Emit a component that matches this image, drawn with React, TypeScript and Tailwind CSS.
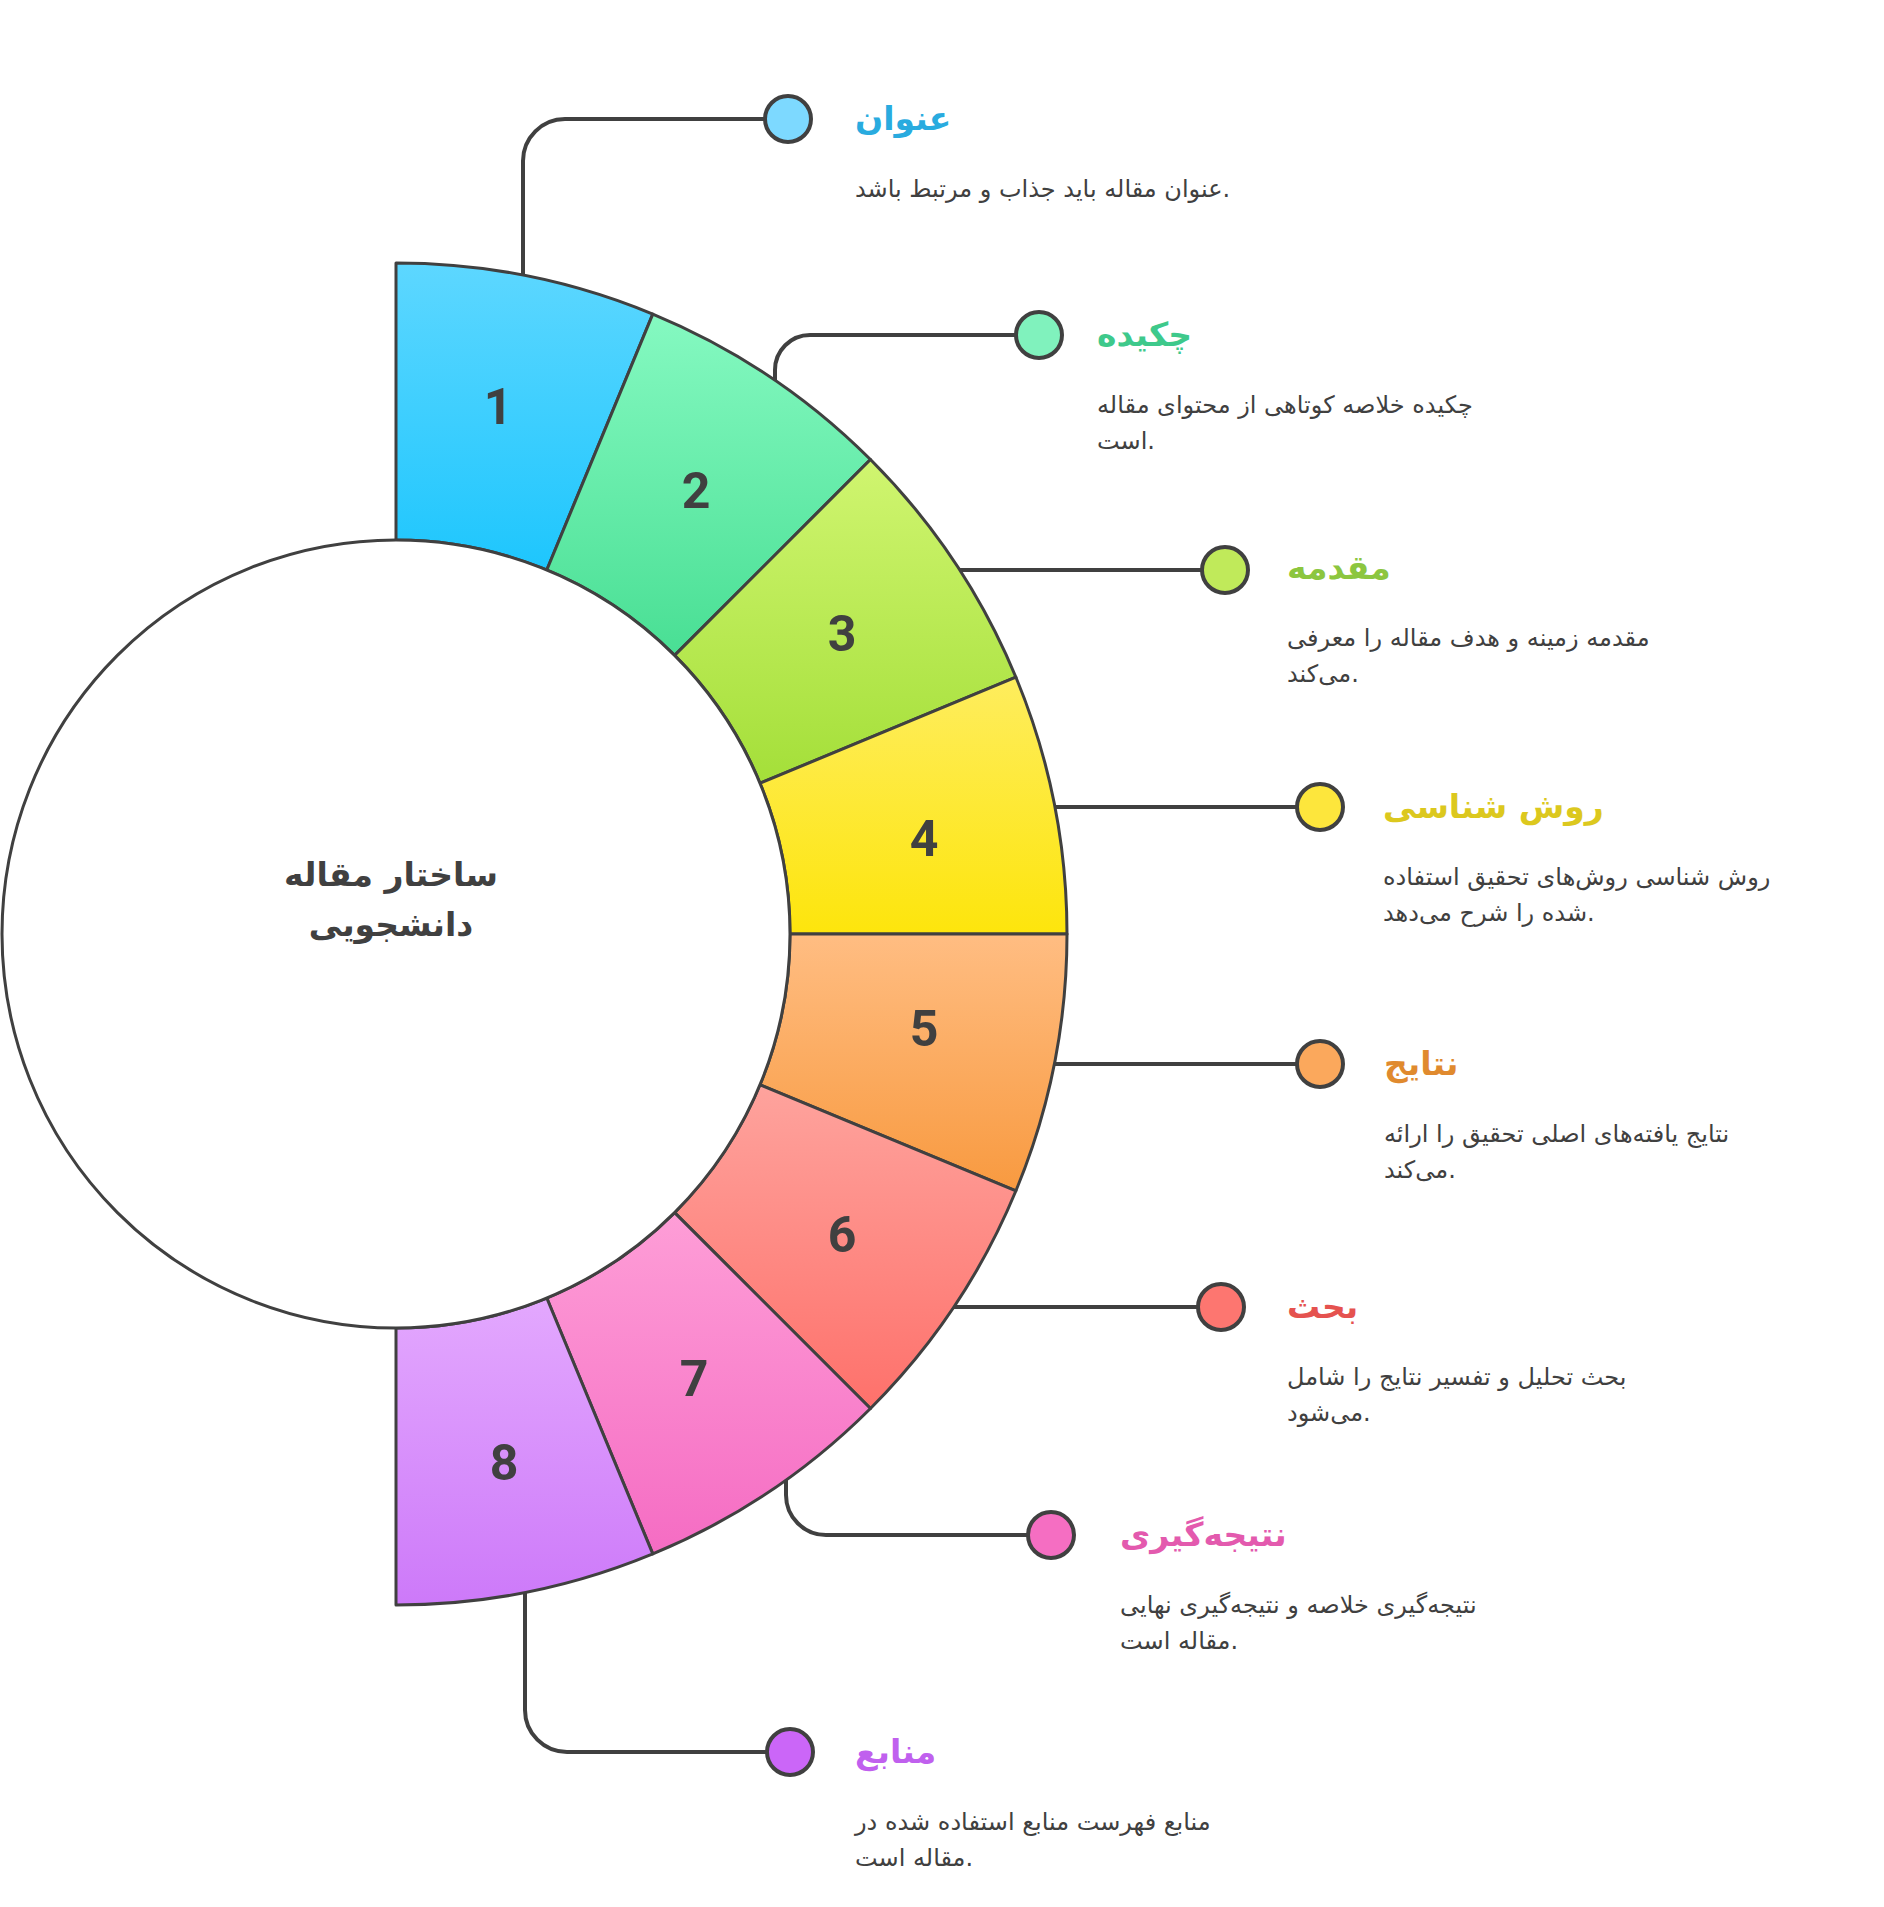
import React from "react";

// ساختار مقاله دانشجویی — radial diagram

const CX = 396;
const CY = 934;
const R_IN = 394;
const R_OUT = 671;

type Item = {
  n: number;
  title: string;
  lines: string[];
  dot: [number, number];
  num: [number, number];
  pos: string; // label position on the canvas
  titleClass: string;
  from: string;
  to: string;
  dotFill: string;
};

const items: Item[] = [
  {
    n: 1,
    title: "عنوان",
    lines: ["عنوان مقاله باید جذاب و مرتبط باشد."],
    dot: [788, 119],
    num: [498, 406],
    pos: "left-[855px] top-[97px]",
    titleClass: "text-[#29abdf]",
    from: "#5dd7ff",
    to: "#1ec6fd",
    dotFill: "#7dd9ff",
  },
  {
    n: 2,
    title: "چکیده",
    lines: ["چکیده خلاصه کوتاهی از محتوای مقاله", "است."],
    dot: [1039, 335],
    num: [696, 490],
    pos: "left-[1097px] top-[313px]",
    titleClass: "text-[#3ec98b]",
    from: "#85f9c1",
    to: "#49df94",
    dotFill: "#80f2bd",
  },
  {
    n: 3,
    title: "مقدمه",
    lines: ["مقدمه زمینه و هدف مقاله را معرفی", "می‌کند."],
    dot: [1225, 570],
    num: [842, 633],
    pos: "left-[1287px] top-[546px]",
    titleClass: "text-[#8cc63f]",
    from: "#d0f570",
    to: "#a4df39",
    dotFill: "#c0ea5a",
  },
  {
    n: 4,
    title: "روش شناسی",
    lines: ["روش شناسی روش‌های تحقیق استفاده", "شده را شرح می‌دهد."],
    dot: [1320, 807],
    num: [924, 838],
    pos: "left-[1383px] top-[785px]",
    titleClass: "text-[#dcc81e]",
    from: "#feed5e",
    to: "#fde50c",
    dotFill: "#fde63c",
  },
  {
    n: 5,
    title: "نتایج",
    lines: ["نتایج یافته‌های اصلی تحقیق را  ارائه", "می‌کند."],
    dot: [1320, 1064],
    num: [924, 1028],
    pos: "left-[1384px] top-[1042px]",
    titleClass: "text-[#e08a2e]",
    from: "#ffbd82",
    to: "#f89a40",
    dotFill: "#fba85c",
  },
  {
    n: 6,
    title: "بحث",
    lines: ["بحث تحلیل و تفسیر نتایج را شامل", "می‌شود."],
    dot: [1221, 1307],
    num: [842, 1234],
    pos: "left-[1287px] top-[1285px]",
    titleClass: "text-[#e5524f]",
    from: "#fea39d",
    to: "#fe716b",
    dotFill: "#fd7670",
  },
  {
    n: 7,
    title: "نتیجه‌گیری",
    lines: ["نتیجه‌گیری خلاصه و نتیجه‌گیری نهایی", "مقاله است."],
    dot: [1051, 1535],
    num: [694, 1378],
    pos: "left-[1120px] top-[1513px]",
    titleClass: "text-[#e35aae]",
    from: "#fe9ed7",
    to: "#f56cc3",
    dotFill: "#f56ec2",
  },
  {
    n: 8,
    title: "منابع",
    lines: ["منابع فهرست منابع استفاده شده در", "مقاله است."],
    dot: [790, 1752],
    num: [504, 1462],
    pos: "left-[855px] top-[1730px]",
    titleClass: "text-[#c060ee]",
    from: "#e3a8fe",
    to: "#cd79f9",
    dotFill: "#cb66f8",
  },
];

// connector paths, from the ring out to each dot
const connectors = [
  "M523 276 L523 161 A42 42 0 0 1 565 119 L765 119",
  "M775 381 L775 370 A35 35 0 0 1 810 335 L1016 335",
  "M955 570 L1202 570",
  "M1050 807 L1297 807",
  "M1050 1064 L1297 1064",
  "M950 1307 L1198 1307",
  "M786 1476 L786 1495 A40 40 0 0 0 826 1535 L1028 1535",
  "M525 1588 L525 1710 A42 42 0 0 0 567 1752 L767 1752",
];

function pt(r: number, deg: number): [number, number] {
  const a = (deg * Math.PI) / 180;
  return [CX + r * Math.sin(a), CY - r * Math.cos(a)];
}

function sector(a0: number, a1: number) {
  const [x0, y0] = pt(R_OUT, a0);
  const [x1, y1] = pt(R_OUT, a1);
  const [x2, y2] = pt(R_IN, a1);
  const [x3, y3] = pt(R_IN, a0);
  return `M${x0} ${y0} A${R_OUT} ${R_OUT} 0 0 1 ${x1} ${y1} L${x2} ${y2} A${R_IN} ${R_IN} 0 0 0 ${x3} ${y3} Z`;
}

function Diagram() {
  return (
    <svg width={1884} height={1907} viewBox="0 0 1884 1907" className="absolute left-0 top-0">
      <defs>
        {items.map((it) => (
          <linearGradient key={it.n} id={`g${it.n}`} x1="0" y1="0" x2="0" y2="1">
            <stop offset="0" stopColor={it.from} />
            <stop offset="1" stopColor={it.to} />
          </linearGradient>
        ))}
      </defs>

      {connectors.map((d, i) => (
        <path key={i} d={d} fill="none" stroke="#404040" strokeWidth={4} />
      ))}

      {items.map((it, i) => (
        <path
          key={it.n}
          d={sector(i * 22.5, (i + 1) * 22.5)}
          fill={`url(#g${it.n})`}
          stroke="#404040"
          strokeWidth={3}
          strokeLinejoin="round"
        />
      ))}

      <circle cx={CX} cy={CY} r={R_IN} fill="#ffffff" stroke="#404040" strokeWidth={3} />

      {items.map((it) => (
        <text
          key={it.n}
          x={it.num[0]}
          y={it.num[1] + 18}
          textAnchor="middle"
          fill="#404040"
          className="text-[50px] font-bold [font-family:Roboto,'Liberation_Sans',sans-serif]"
        >
          {it.n}
        </text>
      ))}

      {items.map((it) => (
        <circle
          key={it.n}
          cx={it.dot[0]}
          cy={it.dot[1]}
          r={23}
          fill={it.dotFill}
          stroke="#404040"
          strokeWidth={4}
        />
      ))}
    </svg>
  );
}

function Label({ it }: { it: Item }) {
  return (
    <div className={`absolute flex flex-col gap-[30px] ${it.pos}`}>
      <div className={`h-[44px] whitespace-nowrap text-[33px] font-bold leading-[44px] ${it.titleClass}`}>
        {it.title}
      </div>
      <div className="flex flex-col text-[24px] leading-[36px] text-[#404040]">
        {it.lines.map((l, k) => (
          <div key={k} className="whitespace-nowrap">
            {l}
          </div>
        ))}
      </div>
    </div>
  );
}

export default function App() {
  return (
    <div className="relative h-[1907px] w-[1884px] overflow-hidden bg-white [font-family:'DejaVu_Sans','Noto_Sans',sans-serif]">
      <Diagram />

      <div className="absolute left-[191px] top-[850px] flex w-[400px] flex-col items-center text-[33px] font-bold leading-[50px] text-[#404040]">
        <div>ساختار مقاله</div>
        <div>دانشجویی</div>
      </div>

      {items.map((it) => (
        <Label key={it.n} it={it} />
      ))}
    </div>
  );
}
